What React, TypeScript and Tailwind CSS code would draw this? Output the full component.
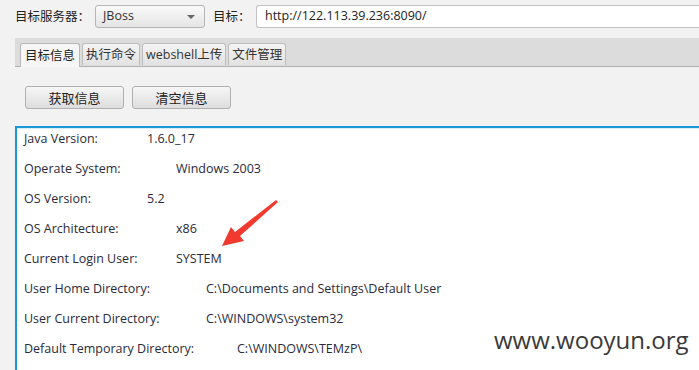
const cjk = '"Noto Sans CJK SC", "Open Sans", sans-serif';

const rows = [
    { label: 'Java Version:', value: '1.6.0_17', w: 'w-[123px]' },
    { label: 'Operate System:', value: 'Windows 2003', w: 'w-[152px]' },
    { label: 'OS Version:', value: '5.2', w: 'w-[123px]' },
    { label: 'OS Architecture:', value: 'x86', w: 'w-[152px]' },
    { label: 'Current Login User:', value: 'SYSTEM', w: 'w-[152px]' },
    { label: 'User Home Directory:', value: 'C:\\Documents and Settings\\Default User', w: 'w-[182px]' },
    { label: 'User Current Directory:', value: 'C:\\WINDOWS\\system32', w: 'w-[182px]' },
    { label: 'Default Temporary Directory:', value: 'C:\\WINDOWS\\TEMzP\\', w: 'w-[213px]' },
];

const tabs = ['执行命令', 'webshell上传', '文件管理'];

export default function App() {
    return (
        <div className="relative w-[699px] h-[370px] overflow-hidden bg-[#f2f2f2] flex flex-col text-[#222]">
            {/* top row */}
            <div className="flex items-center h-[23px] mt-[5px]" style={{ fontFamily: cjk }}>
                <span className="ml-[15px] w-[80px] text-[12.5px]">目标服务器：</span>
                <div className="w-[110px] h-[23px] border border-[#b5b5b5] rounded-[3px] bg-gradient-to-b from-[#fafafa] to-[#e4e4e4] flex items-center pl-[7px] pr-[9px] justify-between">
                    <span className="text-[12.5px] text-[#333]" style={{ fontFamily: '"Open Sans", sans-serif' }}>JBoss</span>
                    <span className="w-0 h-0 border-l-[4px] border-r-[4px] border-t-[4px] border-l-transparent border-r-transparent border-t-[#666]"></span>
                </div>
                <span className="ml-[8px] w-[43px] text-[12.5px]">目标：</span>
                <div className="flex-1 h-[23px] bg-white border border-[#c4c4c4] rounded-l-[3px] border-r-0 flex items-center pl-[8px]">
                    <span className="text-[12.5px] text-[#222]" style={{ fontFamily: '"Open Sans", sans-serif' }}>http://122.113.39.236:8090/</span>
                </div>
            </div>

            {/* tabs */}
            <div className="ml-[15px] mt-[10px] h-[29px] bg-[#dcdcdc] border-b border-[#b0b0b0] flex items-end pl-[5px] gap-[2px]" style={{ fontFamily: cjk }}>
                <div className="h-[24px] -mb-px px-[4px] bg-[#f6f6f6] border border-b-0 border-[#b8b8b8] rounded-t-[3px] flex items-center text-[12.5px]">目标信息</div>
                {tabs.map((t) => (
                    <div key={t} className="h-[22px] mb-px px-[3px] bg-gradient-to-b from-[#f4f4f4] to-[#e2e2e2] border border-b-0 border-[#bdbdbd] rounded-t-[3px] flex items-center text-[12.5px] text-[#333]">
                        {t === 'webshell上传' ? (
                            <span>
                                <span style={{ fontFamily: '"Open Sans", sans-serif' }}>webshell</span>上传
                            </span>
                        ) : (
                            t
                        )}
                    </div>
                ))}
            </div>

            {/* buttons */}
            <div className="flex gap-[8px] ml-[25px] mt-[19px]" style={{ fontFamily: cjk }}>
                <button className="w-[99px] h-[23px] border border-[#b0b0b0] rounded-[3px] bg-gradient-to-b from-[#f6f6f6] to-[#dedede] text-[13px] text-[#222]">获取信息</button>
                <button className="w-[99px] h-[23px] border border-[#b0b0b0] rounded-[3px] bg-gradient-to-b from-[#f6f6f6] to-[#dedede] text-[13px] text-[#222]">清空信息</button>
            </div>

            {/* info area */}
            <div className="flex-1 ml-[15px] mt-[17px] border-l-2 border-t-2 border-[#1a98d5] bg-white">
                <div className="border-t border-[#d6eefa] flex flex-col gap-[14px] pt-[2px] pl-[7px]" style={{ fontFamily: '"Open Sans", sans-serif' }}>
                    {rows.map((r) => (
                        <div key={r.label} className="flex leading-[16px] text-[12.5px] text-[#2a2a3a] whitespace-pre">
                            <span className={r.w}>{r.label}</span>
                            <span>{r.value}</span>
                        </div>
                    ))}
                </div>
            </div>

            {/* red arrow */}
            <svg className="absolute left-[218px] top-[196px]" width="64" height="54" viewBox="0 0 64 54">
                <polygon points="58,4 60,6 22,40 26,45 4,50 13,31 17,36" fill="#f03a30" />
            </svg>

            {/* watermark */}
            <div className="absolute left-[494px] top-[326px] text-[24px] leading-[28px] text-[#3a3a3a]" style={{ fontFamily: '"Open Sans", sans-serif' }}>
                www.wooyun.org
            </div>
        </div>
    );
}
